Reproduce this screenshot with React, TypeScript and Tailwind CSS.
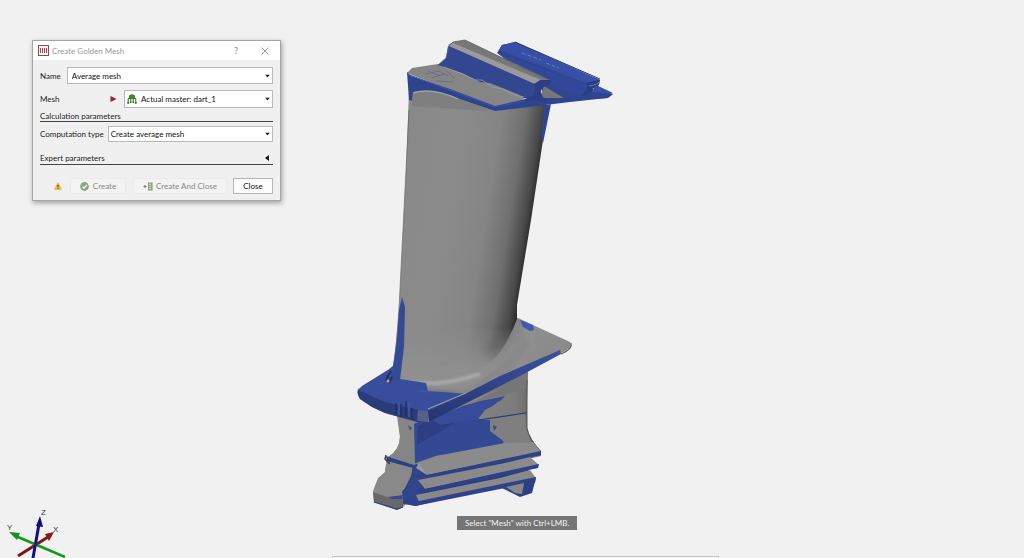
import React, { useState } from "react";

const selectClass =
  "block w-full appearance-none rounded-none border border-[#b9b9b9] bg-white pr-4 text-[8px] leading-3 text-[#111] outline-none";

function SelectBox({
  id,
  value,
  options,
  className,
  icon,
}: {
  id: string;
  value: string;
  options: string[];
  className: string;
  icon?: React.ReactNode;
}) {
  const [current, setCurrent] = useState(value);
  return (
    <div className="relative min-w-0 flex-1">
      <select id={id} value={current} onChange={(e) => setCurrent(e.target.value)} className={`${selectClass} ${className}`}>
        {options.map((o) => (
          <option key={o}>{o}</option>
        ))}
      </select>
      {icon}
      <svg className="pointer-events-none absolute top-1/2 right-[3px] h-[3px] w-[5px] -translate-y-1/2" viewBox="0 0 5 3">
        <path d="M0 0H5L2.5 3Z" fill="#222" />
      </svg>
    </div>
  );
}

function MeshIcon() {
  return (
    <svg className="pointer-events-none absolute top-1 left-[3px] h-[10px] w-[10px]" viewBox="0 0 10 10">
      <path d="M1.8 3.4C1.8 1.2 3 0.3 5 0.3S8.2 1.2 8.2 3.4V5H1.8Z" fill="#3f8a2a" />
      <path d="M1.2 9V4.5H3M8.8 9V4.5H7M3.8 5V8.5M6.2 5V8.5" stroke="#2f6d20" strokeWidth="1" fill="none" />
      <path d="M0.3 8H2.2V9.8H0.3ZM7.8 8H9.7V9.8H7.8ZM3.1 7.6H4.4V9H3.1ZM5.6 7.6H6.9V9H5.6Z" fill="#2f6d20" />
    </svg>
  );
}

function CreateGoldenMeshDialog() {
  return (
    <section
      aria-label="Create Golden Mesh"
      className="absolute top-10 left-8 w-[249px] border border-[#a5a5a5] bg-[#f0f0f0] shadow-[1px_2px_5px_rgba(0,0,0,0.35)]"
    >
      <header className="flex h-[19px] items-center bg-white pr-[11px] pl-[5px]">
        <svg className="h-[11px] w-[11px]" viewBox="0 0 11 11">
          <rect x="0.5" y="0.5" width="10" height="10" fill="#fbf1f1" stroke="#8f4a4e" />
          <path d="M2.5 3V8M4.5 3V8M6.5 3V8M8.5 3V8" stroke="#b0444a" strokeWidth="1" />
        </svg>
        <h1 className="ml-[3px] flex-1 text-[8px] leading-3 text-[#999]">Create Golden Mesh</h1>
        <button type="button" aria-label="Help" className="mr-[23px] text-[9px] leading-3 text-[#888]">
          ?
        </button>
        <button type="button" aria-label="Close window">
          <svg className="h-2 w-2" viewBox="0 0 8 8">
            <path d="M0.5 0.5L7.5 7.5M7.5 0.5L0.5 7.5" stroke="#888" strokeWidth="0.9" />
          </svg>
        </button>
      </header>

      <form className="px-[7px] pt-[7px] pb-[6px]" onSubmit={(e) => e.preventDefault()}>
        <div className="flex items-center gap-[6px]">
          <label htmlFor="name">Name</label>
          <SelectBox id="name" value="Average mesh" options={["Average mesh"]} className="h-[17px] pl-1" />
        </div>

        <div className="mt-[6px] flex items-center">
          <label htmlFor="mesh" className="w-[70px]">
            Mesh
          </label>
          <svg className="mr-[7px] h-[6px] w-[7px]" viewBox="0 0 7 6">
            <path d="M0.5 0L6.5 3L0.5 6Z" fill="#a81c20" />
          </svg>
          <SelectBox
            id="mesh"
            value="Actual master: dart_1"
            options={["Actual master: dart_1"]}
            className="h-[18px] pl-4"
            icon={<MeshIcon />}
          />
        </div>

        <h2 className="mt-[3px] border-b border-[#444] leading-[10px]">Calculation parameters</h2>

        <div className="mt-1 flex items-center gap-1">
          <label htmlFor="computation">Computation type</label>
          <SelectBox
            id="computation"
            value="Create average mesh"
            options={["Create average mesh"]}
            className="h-[16px] pl-[2px]"
          />
        </div>

        <button
          type="button"
          aria-expanded="false"
          className="mt-[10px] flex w-full items-center justify-between border-b border-[#444] pr-1 leading-3"
        >
          Expert parameters
          <svg className="h-[6px] w-[4px]" viewBox="0 0 4 6">
            <path d="M4 0V6L0 3Z" fill="#111" />
          </svg>
        </button>

        <div className="mt-[13px] flex items-center justify-end">
          <svg className="mr-2 h-2 w-2" viewBox="0 0 8 8">
            <path d="M4 0.5L7.8 7.6H0.2Z" fill="#f3bd3a" stroke="#e0a52a" strokeWidth="0.4" />
            <path d="M4 2.8V5.2M4 5.9V6.8" stroke="#3b2c08" strokeWidth="1" />
          </svg>
          <button
            type="button"
            disabled
            className="flex h-4 w-14 items-center justify-center gap-1 border border-[#ebebeb] bg-[#f3f3f3] text-[#888]"
          >
            <svg className="h-[9px] w-[9px]" viewBox="0 0 9 9">
              <circle cx="4.5" cy="4.5" r="4.4" fill="#86aa80" />
              <path d="M2.3 4.6L4 6.2L6.8 3" stroke="#fff" strokeWidth="1.2" fill="none" />
            </svg>
            Create
          </button>
          <button
            type="button"
            disabled
            className="ml-[7px] flex h-4 w-[94px] items-center justify-center gap-[3px] border border-[#ebebeb] bg-[#f3f3f3] text-[#888]"
          >
            <svg className="h-[9px] w-[10px]" viewBox="0 0 10 9">
              <path d="M0.4 4.5H3.6M2 2.9V6.1" stroke="#b5676a" strokeWidth="1.1" fill="none" />
              <rect x="5" y="0.4" width="4.6" height="8.2" fill="#86aa80" />
              <path d="M6 2.2H8.2M6 4.4H8.2M6 6.6H8.2" stroke="#e4efe1" strokeWidth="0.8" />
            </svg>
            Create And Close
          </button>
          <button type="button" className="ml-[6px] h-4 w-10 border border-[#b5b5b5] bg-[#fdfdfd] text-[#111]">
            Close
          </button>
        </div>
      </form>
    </section>
  );
}

// Turbine blade: grey is the nominal surface, blue is the scanned mesh
function BladeMesh() {
  return (
    <svg className="absolute top-[35px] left-[350px] h-[480px] w-[270px]" viewBox="350 35 270 480" role="img" aria-label="Blade mesh">
      <defs>
        <linearGradient id="foil" gradientUnits="userSpaceOnUse" x1="400" y1="199" x2="532" y2="220">
          <stop offset="0" stopColor="#898989" />
          <stop offset="0.35" stopColor="#8b8b8b" />
          <stop offset="0.65" stopColor="#858585" />
          <stop offset="0.83" stopColor="#6f6f6f" />
          <stop offset="0.95" stopColor="#484848" />
          <stop offset="1" stopColor="#2c2c2c" />
        </linearGradient>
        <linearGradient id="shelf" gradientUnits="userSpaceOnUse" x1="490" y1="345" x2="540" y2="370">
          <stop offset="0" stopColor="#7b7b7b" />
          <stop offset="0.5" stopColor="#8f8f8f" />
          <stop offset="1" stopColor="#8b8b8b" />
        </linearGradient>
        <linearGradient id="fade" gradientUnits="userSpaceOnUse" x1="0" y1="322" x2="0" y2="372">
          <stop offset="0" stopColor="#8b8b8b" stopOpacity="0" />
          <stop offset="1" stopColor="#8f8f8f" />
        </linearGradient>
        <linearGradient id="neck" gradientUnits="userSpaceOnUse" x1="455" y1="0" x2="530" y2="0">
          <stop offset="0" stopColor="#858585" />
          <stop offset="0.8" stopColor="#7c7c7c" />
          <stop offset="1" stopColor="#6b6b6b" />
        </linearGradient>
        <linearGradient id="rim" x1="0" y1="0" x2="0" y2="1">
          <stop offset="0" stopColor="#3c52a0" />
          <stop offset="1" stopColor="#25346f" />
        </linearGradient>
        <filter id="soft" x="-20%" y="-20%" width="140%" height="140%">
          <feGaussianBlur stdDeviation="1.6" />
        </filter>
        <filter id="softer" x="-60%" y="-60%" width="220%" height="220%">
          <feGaussianBlur stdDeviation="4" />
        </filter>
      </defs>

      {/* root neck */}
      <path d="M397 416L440 405L528 366L527 402L527 428Q529 438 541 451L541 456L430 480L403 507L385 470L387 458Q400 450 400 437Z" fill="url(#neck)" />
      <path d="M398 417L415 422L414 440L413 465L387 460L388 457Q400 450 400 436Z" fill="#858585" />
      <path d="M414 424L440 411L505 396L500 401L486 406L478 419L491 420L490 430L504 441L503 444L460 453L436 456L430 464L415 463Z" fill="#344993" />
      <path d="M418 426L438 415L478 404L460 420L417 445Z" fill="#2d3f83" />
      <path d="M465 395L528 369L527 388L507 394L440 410Z" fill="#777" />
      <path d="M428 417L465 406L480 401L502 397Q498 404 485 410L478 419L440 425Z" fill="#364c99" />
      <path d="M424 421L440 411L500 389L480 399L436 417Z" fill="#858585" />
      <path d="M478 420L526 413" stroke="#293b7c" strokeWidth="1.2" fill="none" />
      <path d="M490 420L525 414L526 428L531 442L505 444L502 440L490 431Z" fill="#7f7f7f" />
      <path d="M493 425L497 427L494 431Z" fill="#34468c" />
      <path d="M408 425L412 428L410 431Z" fill="#40518e" />
      <path d="M527 380L527 428Q529 439 541 452" stroke="#4b4b4b" strokeWidth="0.9" fill="none" />
      <path d="M386 456L395 459L414 465L413 469L387 462Z" fill="#2d4084" />

      {/* root fins */}
      <path d="M412 466L420 462L430 480L440 500L416 506L403 504L402 490Z" fill="#31458e" />
      <path d="M418 476L530 454L528 476L425 498Z" fill="#2c3e80" />
      <path d="M416 463L436 456L505 443L533 442L541 452L427 475Z" fill="#8b8b8b" />
      <path d="M416 474L427 475L541 451L541 455L418 480Z" fill="#2e4187" />
      <path d="M418 480L500 464L530 457L539 465L425 489Z" fill="#8a8a8a" />
      <path d="M418 488L425 489L539 464L538 468L420 494Z" fill="#2e4187" />
      <path d="M416 495L500 478L530 470L536 478L419 502Z" fill="#898989" />
      <path d="M405 500L419 501L536 477L535 483L500 489L415 506L405 503Z" fill="#2f4289" />
      <path d="M502 488L523 483L536 478L532 493L520 497L514 494Z" fill="#2e4084" />
      <path d="M506 487L524 483L522 494L515 493Z" fill="#888" />
      <path d="M419 463L416 468L427 475" fill="#999" />

      {/* root front block */}
      <path d="M387 461L413 468L411 476L405 488L402 492L403 507L397 510L374 502L373 491L378 478L385 472Z" fill="#898989" />
      <path d="M373 492L390 498L403 496L403 507L397 510L374 502Z" fill="#686868" />
      <path d="M388 497L403 495L402 499L392 499Z" fill="#344993" />
      <path d="M374 502L397 509L403 507" stroke="#2f4289" strokeWidth="1.2" fill="none" />
      <path d="M413 467L412 477L406 488L402 492" stroke="#303f75" strokeWidth="1" fill="none" />
      <path d="M386 455L385 459L390 464" stroke="#3a3a3a" strokeWidth="1.4" fill="none" />

      {/* lower platform */}
      <path d="M388 370L358 389Q356 393 360 399L372 407L385 413L417 422L429 422L561 353Q574 348 570 342L533 325L518 318L480 330Z" fill="url(#shelf)" />
      <path d="M516 319L480 352L428 365L400 380L430 385L465 395L510 374L530 345Z" fill="#898989" filter="url(#soft)" />
      <path d="M358 391L362 386L388 370L394 365L400 379L424 383L428 391L470 394L429 412L418 411L385 403Z" fill="#384e9c" />
      <path d="M358 390L385 402L428 412L428 422L417 422L385 413L372 407L360 399Q357 394 358 390Z" fill="#2b3c7c" />
      <path d="M418 410L429 411L428 422L417 421Z" fill="#56608a" />
      <path d="M396 403V415M401 404V417M406 401V417M412 408V419" stroke="#202d60" strokeWidth="1.2" />
      <path d="M399 402V415M409 402V417" stroke="#4358a3" strokeWidth="1.5" />
      <path d="M428 411L465 394L500 376L560 350L561 354L520 376L429 422Z" fill="url(#rim)" />
      <path d="M428 409L466 393" stroke="#9a9a9a" strokeWidth="1.2" />
      <path d="M561 354Q573 349 571 343" stroke="#555" strokeWidth="1.2" fill="none" />

      {/* airfoil */}
      <path d="M409 92L549 105L543 140L531 220L517 305V319Q510 338 500 352Q485 372 452 383L425 385L400 380L392 375Q396 345 399 310L406 170Z" fill="url(#foil)" />
      <path d="M512 330Q518 334 527 336L500 366L470 388L420 390L400 380L398 345L450 330Z" fill="url(#fade)" filter="url(#soft)" />
      <path d="M508 324Q504 338 488 352" stroke="#444" strokeWidth="12" fill="none" opacity="0.3" filter="url(#softer)" />
      <path d="M520 320L533 325L534 330L530 331L523 327Z" fill="#3f59b5" />
      <path d="M410 383Q445 386 480 374" stroke="#b0b0b0" strokeWidth="3" fill="none" filter="url(#soft)" />
      <path d="M409 110L406 170L399 308L396 350" stroke="#5d5d5d" strokeWidth="0.6" fill="none" />
      <path d="M402 297L405 307L404 347L400 380L390 383L393 366L397 340L399 310Z" fill="#354a95" />
      <path d="M400 379L426 383L428 391L400 390L388 382Z" fill="#384e9c" />
      <path d="M544 106L551 104L543 143L541 136Z" fill="#30458e" />
      <path d="M391 371L388 376L386 381M389 383L392 377" stroke="#29314d" strokeWidth="2" fill="none" />
      <circle cx="388" cy="381" r="1.5" fill="#aaa" />

      {/* second rail */}
      <path d="M497 53L502 45L515 42L600 80L599 85L592 89L613 94L608 98L545 102L540 84Z" fill="#31468f" />
      <path d="M502 45L515 42L600 80L586 83L499 50Z" fill="#3650a6" />
      <path d="M498 53L586 84L588 91L578 97L550 85L520 72Z" fill="#30479a" />
      <path d="M522 53L541 60M546 63L559 68" stroke="#7189cc" strokeWidth="0.8" strokeDasharray="4 2" />
      <path d="M515 42L600 79" stroke="#25336b" strokeWidth="1" />
      <path d="M596 85L613 93L600 97L589 95Z" fill="#3951a5" />
      <path d="M586 83L600 80L598 86Q590 87 592 95H580Q590 91 586 83Z" fill="#2a3d82" />
      <path d="M589 86Q598 85 600 81" stroke="#6a78ad" strokeWidth="1" fill="none" />
      <path d="M544 86L564 98L546 101L540 97Z" fill="#777" />

      {/* upper platform */}
      <path d="M407 73L412 68L438 64L490 82L527 96L520 102L495 108Z" fill="#858585" />
      <path d="M407 72L411 76L450 89L495 106L522 100L545 98L574 98L592 92L613 94L607 98L570 102L495 111L450 96Q420 88 413 93L412 101L409 100Z" fill="#2f448e" />
      <path d="M413 92Q432 86 462 100L495 111L470 110L412 106Z" fill="#7f7f7f" />
      <path d="M413 93Q432 87 458 99" stroke="#a8a8a8" strokeWidth="1.2" fill="none" />
      <path d="M425 74L439 71L448 76M432 78L444 74M437 81L453 82M446 70L455 79M428 71L440 76" stroke="#626b88" strokeWidth="0.8" fill="none" />

      {/* first rail */}
      <path d="M438 65L446 58L448 46L452 45L536 82L540 91L534 99L524 98L518 94L505 89L490 83L480 82L462 73Z" fill="#324790" />
      <path d="M448 45L453 42L465 40L550 80L545 83L535 84Z" fill="#777" />
      <path d="M449 46L453 43L541 80L535 84Z" fill="#9a9a9a" />
      <path d="M438 65L446 58L449 46L453 42L465 40L550 81" stroke="#666" strokeWidth="0.8" fill="none" />
      <path d="M534 84L540 80L551 80L549 85L543 87Q539 91 543 97L548 101H520L532 96Q537 91 534 84Z" fill="#2c3f85" />
      <path d="M444 67L465 75L475 80L482 80L492 87L503 89L514 95L524 97" stroke="#9a9ea9" strokeWidth="0.8" fill="none" />
      <path d="M407 74L450 90L495 107L525 101" stroke="#3c54a8" strokeWidth="1" fill="none" />
    </svg>
  );
}

function AxisTriad() {
  return (
    <svg className="absolute bottom-0 left-0 h-[58px] w-20" viewBox="0 500 80 58" role="img" aria-label="View axes">
      <path d="M18 556L48 537" stroke="#7e1518" strokeWidth="3" />
      <path d="M45 534L54 532L49 541Z" fill="#8f181b" />
      <path d="M18 537L65 557" stroke="#139a1c" strokeWidth="2.6" />
      <path d="M9 532L20 533L17 540Z" fill="#16911f" />
      <path d="M33 558L39 524" stroke="#10108c" strokeWidth="3" />
      <path d="M40 516L43 527L36 526Z" fill="#0d0d83" />
      <circle cx="36" cy="544" r="2" fill="#17324a" />
      <g fill="#333" fontSize="8" fontFamily="Liberation Sans, sans-serif">
        <text x="41" y="515">Z</text>
        <text x="7" y="530">Y</text>
        <text x="53" y="532">X</text>
      </g>
    </svg>
  );
}

export default function App() {
  return (
    <main className="relative min-h-screen overflow-hidden bg-[#f1f1f1] font-['Lato','Open_Sans',sans-serif] text-[8px] leading-3 text-[#222]">
      <BladeMesh />
      <AxisTriad />
      <CreateGoldenMeshDialog />
      <p className="absolute bottom-7 left-[457px] bg-[#757575] px-2 py-px text-[#f4f4f4]">Select "Mesh" with Ctrl+LMB.</p>
      <div className="absolute bottom-0 left-[332px] h-[2px] w-[387px] border border-b-0 border-[#c4c4c4] bg-[#f5f5f5]" />
    </main>
  );
}
